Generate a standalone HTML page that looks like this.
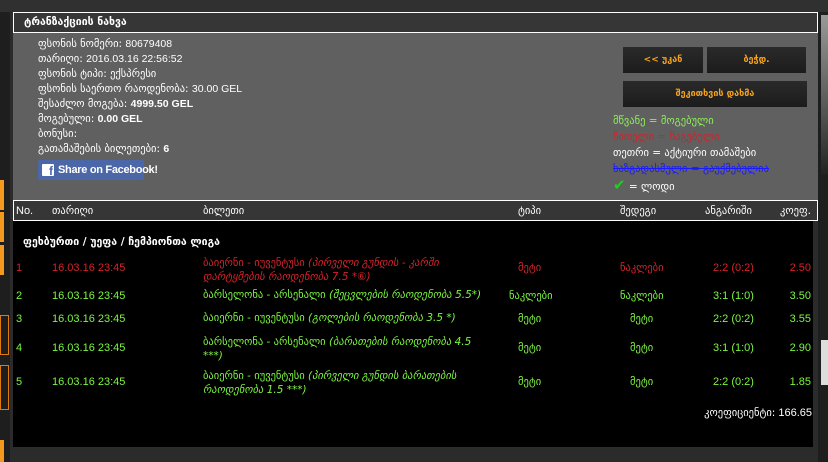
<!DOCTYPE html>
<html><head><meta charset="utf-8"><style>
*{margin:0;padding:0;box-sizing:border-box}
body{width:828px;height:462px;background:#2b2b2b;font-family:"Liberation Sans","DejaVu Sans",sans-serif;font-size:11px;color:#fff;position:relative;overflow:hidden}
.a{position:absolute;white-space:nowrap}
.geo{font-family:"DejaVu Sans","Liberation Sans",sans-serif;font-size:10.5px}
.btn{position:absolute;background:linear-gradient(#2a2a2a,#1c1c1c);color:#f7a21b;font-weight:bold;text-align:center;font-family:"DejaVu Sans",sans-serif;font-size:9px}
.g{color:#7cf542}.r{color:#d3232a}
.k{right:17px}
</style></head><body>
<div class="a" style="left:0;top:0;width:828px;height:12px;background:#303030"></div>
<div class="a" style="left:0;top:12px;width:10px;height:450px;background:#1e1e1e"></div>
<div class="a" style="left:0;top:180px;width:4px;height:30px;background:#f39a1e"></div>
<div class="a" style="left:0;top:212px;width:4px;height:30px;background:#f39a1e"></div>
<div class="a" style="left:0;top:245px;width:4px;height:30px;background:#f39a1e"></div>
<div class="a" style="left:0;top:315px;width:9px;height:40px;border:1px solid #e07a10"></div>
<div class="a" style="left:0;top:365px;width:9px;height:45px;border:1px solid #e07a10"></div>
<div class="a" style="left:0;top:440px;width:4px;height:22px;background:#f39a1e"></div>
<div class="a" style="left:818px;top:12px;width:10px;height:450px;background:#1e1e1e"></div>
<div class="a" style="left:821px;top:15px;width:7px;height:160px;background:linear-gradient(#999,#555 60%,#222)"></div>
<div class="a" style="left:821px;top:340px;width:7px;height:45px;background:#ddd"></div>
<div class="a" style="left:13px;top:12px;width:805px;height:21px;background:#363636;border:1px solid #fff"></div>
<div class="a geo" style="left:24px;top:16px;font-weight:bold">ტრანზაქციის ნახვა</div>
<div class="a" style="left:13px;top:33px;width:805px;height:167px;background:#606060"></div>
<div class="a geo" style="left:38px;top:37px;line-height:15px">
ფსონის ნომერი: <span style="font-family:'Liberation Sans'">80679408</span><br>
თარიღი: <span style="font-family:'Liberation Sans'">2016.03.16 22:56:52</span><br>
ფსონის ტიპი: ექსპრესი<br>
ფსონის საერთო რაოდენობა: <span style="font-family:'Liberation Sans'">30.00 GEL</span><br>
შესაძლო მოგება: <b style="font-family:'Liberation Sans'">4999.50 GEL</b><br>
მოგებული: <b style="font-family:'Liberation Sans'">0.00 GEL</b><br>
ბონუსი:<br>
გათამაშების ბილეთები: <b style="font-family:'Liberation Sans'">6</b></div>
<div class="a" style="left:38px;top:160px;width:106px;height:20px;background:#4c67a8;border-radius:2px"></div>
<div class="a" style="left:42px;top:164px;width:12px;height:12px;background:#fff;border-radius:1px;color:#4c67a8;font-weight:bold;font-size:12px;line-height:14px;text-align:right;padding-right:1px">f</div>
<div class="a" style="left:58px;top:164px;font-weight:bold;font-size:11px;letter-spacing:-0.3px">Share on Facebook!</div>
<div class="btn" style="left:623px;top:47px;width:80px;height:26px;line-height:26px">&lt;&lt; უკან</div>
<div class="btn" style="left:707px;top:47px;width:99px;height:26px;line-height:26px">ბეჭდ.</div>
<div class="btn" style="left:623px;top:81px;width:184px;height:26px;line-height:26px">შეკითხვის დახმა</div>
<div class="a geo" style="left:613px;top:113px;line-height:16px">
<span style="color:#8ef05a">მწვანე = მოგებული</span><br>
<span style="color:#c8262c">წითელი = წაგებული</span><br>
<span>თეთრი = აქტიური თამაშები</span><br>
<span style="color:#1a1aff;text-decoration:line-through">ხაზგადასმული = გაუქმებულია</span><br>
<span style="color:#22cc22;font-size:15px;font-weight:bold">✔</span> = ლოდი</div>
<div class="a" style="left:13px;top:200px;width:805px;height:21px;background:#363636;border:1px solid #fff"></div>
<div class="a" style="left:16px;top:205px">No.</div>
<div class="a geo" style="left:52px;top:205px">თარიღი</div>
<div class="a geo" style="left:203px;top:205px">ბილეთი</div>
<div class="a geo" style="left:518px;top:205px">ტიპი</div>
<div class="a geo" style="left:620px;top:205px">შედეგი</div>
<div class="a geo" style="left:705px;top:205px">ანგარიში</div>
<div class="a geo" style="left:780px;top:205px">კოეფ.</div>
<div class="a" style="left:13px;top:221px;width:800px;height:226px;background:#000"></div>
<div class="a geo" style="left:23px;top:236px;font-weight:bold">ფეხბურთი / უეფა / ჩემპიონთა ლიგა</div>
<div class="a r" style="left:16px;top:262px">1</div><div class="a r" style="left:52px;top:262px">16.03.16 23:45</div>
<div class="a geo r" style="left:203px;top:256px;line-height:14px">ბაიერნი - იუვენტუსი <i>(პირველი გუნდის - კარში<br>დარტყმების რაოდენობა 7.5 *⑥)</i></div>
<div class="a geo r" style="left:518px;top:262px">მეტი</div><div class="a geo r" style="left:620px;top:262px">ნაკლები</div>
<div class="a r" style="left:713px;top:262px">2:2 (0:2)</div><div class="a r k" style="top:262px">2.50</div>
<div class="a g" style="left:16px;top:290px">2</div><div class="a g" style="left:52px;top:290px">16.03.16 23:45</div>
<div class="a geo g" style="left:203px;top:289px">ბარსელონა - არსენალი <i>(შეცვლების რაოდენობა 5.5*)</i></div>
<div class="a geo g" style="left:509px;top:290px">ნაკლები</div><div class="a geo g" style="left:620px;top:290px">ნაკლები</div>
<div class="a g" style="left:713px;top:290px">3:1 (1:0)</div><div class="a g k" style="top:290px">3.50</div>
<div class="a g" style="left:16px;top:313px">3</div><div class="a g" style="left:52px;top:313px">16.03.16 23:45</div>
<div class="a geo g" style="left:203px;top:312px">ბაიერნი - იუვენტუსი <i>(გოლების რაოდენობა 3.5 *)</i></div>
<div class="a geo g" style="left:518px;top:313px">მეტი</div><div class="a geo g" style="left:630px;top:313px">მეტი</div>
<div class="a g" style="left:713px;top:313px">2:2 (0:2)</div><div class="a g k" style="top:313px">3.55</div>
<div class="a g" style="left:16px;top:342px">4</div><div class="a g" style="left:52px;top:342px">16.03.16 23:45</div>
<div class="a geo g" style="left:203px;top:335px;line-height:14px">ბარსელონა - არსენალი <i>(ბარათების რაოდენობა 4.5<br>***)</i></div>
<div class="a geo g" style="left:518px;top:342px">მეტი</div><div class="a geo g" style="left:630px;top:342px">მეტი</div>
<div class="a g" style="left:713px;top:342px">3:1 (1:0)</div><div class="a g k" style="top:342px">2.90</div>
<div class="a g" style="left:16px;top:376px">5</div><div class="a g" style="left:52px;top:376px">16.03.16 23:45</div>
<div class="a geo g" style="left:203px;top:369px;line-height:14px">ბაიერნი - იუვენტუსი <i>(პირველი გუნდის ბარათების<br>რაოდენობა 1.5 ***)</i></div>
<div class="a geo g" style="left:518px;top:376px">მეტი</div><div class="a geo g" style="left:630px;top:376px">მეტი</div>
<div class="a g" style="left:713px;top:376px">2:2 (0:2)</div><div class="a g k" style="top:376px">1.85</div>
<div class="a" style="right:16px;top:407px"><span class="geo">კოეფიციენტი:</span> 166.65</div>
</body></html>
